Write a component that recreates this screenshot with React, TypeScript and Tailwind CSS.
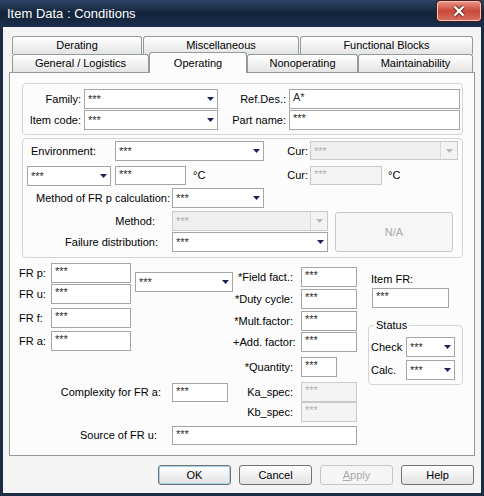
import React from "react";

type BoxProps = { w: string; h?: string; value?: string; disabled?: boolean };

function TextBox({ w, h = "h-[20px]", value = "***", disabled = false }: BoxProps) {
  return (
    <div
      className={`${w} ${h} shrink-0 overflow-hidden whitespace-nowrap border pl-[3px] leading-[14px] ${
        disabled ? "border-[#c9c9c9] bg-[#f4f4f4] text-[#b0b0b0]" : "border-[#a5a5a5] bg-white text-[#2a2a2a]"
      }`}
    >
      {value}
    </div>
  );
}

function Arrow({ color }: { color: string }) {
  return (
    <svg width="7" height="4" viewBox="0 0 7 4" className="shrink-0">
      <polygon points="0,0 7,0 3.5,4" fill={color} />
    </svg>
  );
}

function Combo({ w, h = "h-[20px]", disabled = false }: BoxProps) {
  if (disabled) {
    return (
      <div className={`${w} ${h} shrink-0 flex border border-[#c9c9c9] bg-[#efefef]`}>
        <span className="flex-1 pl-[3px] pt-[2px] leading-[14px] text-[#b0b0b0]">***</span>
        <span className="w-[17px] flex items-center justify-center border-l border-[#d8d8d8] bg-[#f3f3f3]">
          <Arrow color="#b8b8b8" />
        </span>
      </div>
    );
  }
  return (
    <div className={`${w} ${h} shrink-0 flex border border-[#a5a5a5] bg-white`}>
      <span className="flex-1 pl-[3px] pt-[2px] leading-[14px] text-[#2a2a2a]">***</span>
      <span className="w-[14px] flex items-center justify-center">
        <Arrow color="#1a2358" />
      </span>
    </div>
  );
}

function Tab({ w, children }: { w: string; children: React.ReactNode }) {
  return (
    <div className={`${w} h-[18px] shrink-0 flex items-center justify-center border border-b-0 border-[#919b9c] rounded-t-[3px] bg-gradient-to-b from-white to-[#e4e4e4]`}>
      {children}
    </div>
  );
}

function Btn({ children, def = false, disabled = false }: { children: React.ReactNode; def?: boolean; disabled?: boolean }) {
  if (disabled) {
    return (
      <div className="w-[73px] h-[20px] rounded-[3px] border border-[#c6c6c6] bg-[#f5f5f5] flex items-center justify-center text-[#aaaaaa]">
        {children}
      </div>
    );
  }
  return (
    <div
      className={`w-[73px] h-[20px] rounded-[3px] border border-[#727272] bg-gradient-to-b from-white to-[#e2e2e2] flex items-center justify-center ${
        def ? "shadow-[inset_0_0_0_1px_#9fd3ef]" : ""
      }`}
    >
      {children}
    </div>
  );
}

function CloseButton() {
  return (
    <div className="self-start mt-[1px] w-[44px] h-[20px] rounded-[3px] border border-[#f0c4bb] bg-gradient-to-b from-[#e8907f] via-[#c8483a] to-[#d96c5b] flex items-center justify-center shadow-[0_0_0_1px_#4a1a16]">
      <svg width="14" height="12" viewBox="0 0 14 12">
        <path d="M2.5 1.5 L11.5 10.5 M11.5 1.5 L2.5 10.5" stroke="#6a2a22" strokeWidth="4" />
        <path d="M2.5 1.5 L11.5 10.5 M11.5 1.5 L2.5 10.5" stroke="white" strokeWidth="2.4" />
      </svg>
    </div>
  );
}

function FrRow({ label, cls }: { label: string; cls: string }) {
  return (
    <div className={`flex h-[20px] ${cls}`}>
      <span className="w-[32px] leading-[20px]">{label}</span>
      <TextBox w="w-[80px]" />
    </div>
  );
}

function FactorRow({ label, cls, w = "w-[56px]" }: { label: string; cls: string; w?: string }) {
  return (
    <div className={`flex h-[20px] ${cls}`}>
      <span className="w-[68px] text-right pr-[8px] leading-[20px] whitespace-nowrap">{label}</span>
      <TextBox w={w} />
    </div>
  );
}

export default function App() {
  return (
    <div className="w-[484px] h-[496px] flex flex-col bg-[#1d2c42] font-[family-name:Liberation_Sans,Arial,sans-serif] font-normal text-[11px] text-black select-none">
      {/* title bar */}
      <div className="h-[27px] shrink-0 flex items-center pl-[7px] pr-[3px] bg-gradient-to-b from-[#2f4566] via-[#13233a] to-[#1b2e4c]">
        <span className="flex-1 text-[13px] text-white pt-[1px]">Item Data : Conditions</span>
        <CloseButton />
      </div>

      <div className="flex-1 mx-[3px] mb-[3px] bg-[#f4f4f4] flex flex-col">
        {/* tabs */}
        <div className="mt-[9px] ml-[9px] flex h-[18px]">
          <Tab w="w-[130px]">Derating</Tab>
          <Tab w="w-[156px] ml-[1px]">Miscellaneous</Tab>
          <Tab w="w-[173px] ml-[1px]">Functional Blocks</Tab>
        </div>
        <div className="relative z-10 ml-[9px] flex items-start h-[18px]">
          <Tab w="w-[137px]">General / Logistics</Tab>
          <div className="w-[98px] h-[21px] -mt-[2px] shrink-0 flex items-center justify-center border border-b-0 border-[#919b9c] rounded-t-[3px] bg-[#fcfcfc]">
            Operating
          </div>
          <Tab w="w-[111px]">Nonoperating</Tab>
          <Tab w="w-[115px]">Maintainability</Tab>
        </div>

        {/* tab page */}
        <div className="ml-[6px] w-[466px] h-[384px] shrink-0 border border-[#919b9c] bg-[#fcfcfc] flex flex-col">
          {/* identification group */}
          <div className="ml-[12px] mt-[10px] w-[441px] h-[52px] border border-[#d5d5d5] rounded-[4px] pt-[5px] flex flex-col gap-[1px]">
            <div className="flex h-[20px]">
              <span className="w-[61px] text-right pr-[3px] leading-[20px]">Family:</span>
              <Combo w="w-[134px]" />
              <span className="w-[71px] text-right pr-[3px] leading-[20px]">Ref.Des.:</span>
              <TextBox w="w-[171px]" value="A*" />
            </div>
            <div className="flex h-[20px]">
              <span className="w-[61px] text-right pr-[3px] leading-[20px]">Item code:</span>
              <Combo w="w-[134px]" />
              <span className="w-[71px] text-right pr-[3px] leading-[20px]">Part name:</span>
              <TextBox w="w-[171px]" />
            </div>
          </div>

          {/* environment group */}
          <div className="ml-[12px] mt-[3px] w-[441px] h-[120px] border border-[#d5d5d5] rounded-[4px] pt-[2px] flex flex-col">
            <div className="flex h-[20px]">
              <span className="w-[92px] pl-[8px] leading-[20px]">Environment:</span>
              <Combo w="w-[149px]" />
              <span className="w-[46px] text-right pr-[2px] leading-[20px]">Cur:</span>
              <Combo w="w-[148px]" h="h-[19px]" disabled />
            </div>
            <div className="flex h-[20px] mt-[5px]">
              <Combo w="w-[84px] ml-[4px]" />
              <TextBox w="w-[71px] ml-[4px]" h="h-[19px]" />
              <span className="w-[124px] flex justify-between leading-[19px]">
                <span className="pl-[7px]">°C</span>
                <span className="pr-[2px]">Cur:</span>
              </span>
              <TextBox w="w-[72px]" h="h-[19px]" disabled />
              <span className="pl-[6px] leading-[19px]">°C</span>
            </div>
            <div className="flex h-[20px] mt-[2px]">
              <span className="w-[149px] text-right pr-[2px] leading-[20px] whitespace-nowrap">Method of FR p calculation:</span>
              <Combo w="w-[92px]" />
            </div>
            <div className="flex mt-[3px]">
              <div className="flex flex-col gap-[1px]">
                <div className="flex h-[20px]">
                  <span className="w-[149px] text-right pr-[17px] leading-[20px]">Method:</span>
                  <Combo w="w-[156px]" disabled />
                </div>
                <div className="flex h-[20px]">
                  <span className="w-[149px] text-right pr-[14px] leading-[20px]">Failure distribution:</span>
                  <Combo w="w-[156px]" />
                </div>
              </div>
              <div className="ml-[7px] mt-[1px] w-[118px] h-[40px] rounded-[3px] border border-[#c8c8c8] bg-[#f6f6f6] flex items-center justify-center text-[#a8a8a8]">
                N/A
              </div>
            </div>
          </div>

          {/* failure rates */}
          <div className="flex ml-[9px]">
            <div className="flex flex-col">
              <div className="flex mt-[5px]">
                <div className="flex flex-col">
                  <FrRow label="FR p:" cls="" />
                  <FrRow label="FR u:" cls="mt-[1px]" />
                  <FrRow label="FR f:" cls="mt-[4px]" />
                  <FrRow label="FR a:" cls="mt-[3px]" />
                </div>
                <div className="ml-[4px] mt-[9px]">
                  <Combo w="w-[98px]" />
                </div>
                <div className="flex flex-col mt-[4px]">
                  <FactorRow label="*Field fact.:" cls="" />
                  <FactorRow label="*Duty cycle:" cls="mt-[2px]" />
                  <FactorRow label="*Mult.factor:" cls="mt-[2px]" />
                  <FactorRow label="+Add. factor:" cls="mt-[1px]" />
                  <FactorRow label="*Quantity:" cls="mt-[5px]" w="w-[36px]" />
                </div>
              </div>

              <div className="grid grid-cols-[153px_56px_73px_56px] grid-rows-[20px_20px] mt-[5px]">
                <span className="text-right pr-[11px] leading-[20px] whitespace-nowrap">Complexity for FR a:</span>
                <div className="pt-[1px]">
                  <TextBox w="w-[56px]" h="h-[19px]" />
                </div>
                <span className="text-right pr-[8px] leading-[20px]">Ka_spec:</span>
                <TextBox w="w-[56px]" disabled />
                <span />
                <span />
                <span className="text-right pr-[8px] leading-[20px]">Kb_spec:</span>
                <TextBox w="w-[56px]" disabled />
              </div>

              <div className="flex h-[19px] mt-[4px]">
                <span className="w-[153px] text-right pr-[15px] leading-[19px]">Source of FR u:</span>
                <TextBox w="w-[185px]" h="h-[19px]" />
              </div>
            </div>

            <div className="flex flex-col ml-[11px]">
              <span className="mt-[14px] h-[14px] leading-[14px] pl-[3px]">Item FR:</span>
              <TextBox w="w-[77px] ml-[4px] mt-[2px]" />
              <fieldset className="mt-[11px] w-[95px] border border-[#d5d5d5] rounded-[4px] pb-[4px]">
                <legend className="ml-[5px] px-[2px] leading-[13px]">Status</legend>
                <div className="flex h-[20px] mt-[5px]">
                  <span className="w-[37px] pl-[2px] leading-[20px]">Check</span>
                  <Combo w="w-[49px]" />
                </div>
                <div className="flex h-[20px] mt-[3px]">
                  <span className="w-[37px] pl-[2px] leading-[20px]">Calc.</span>
                  <Combo w="w-[49px]" />
                </div>
              </fieldset>
            </div>
          </div>
        </div>

        {/* dialog buttons */}
        <div className="mt-[9px] flex justify-end gap-[8px] pr-[7px]">
          <Btn def>OK</Btn>
          <Btn>Cancel</Btn>
          <Btn disabled>
            <span>
              <span className="underline">A</span>pply
            </span>
          </Btn>
          <Btn>Help</Btn>
        </div>
      </div>
    </div>
  );
}
